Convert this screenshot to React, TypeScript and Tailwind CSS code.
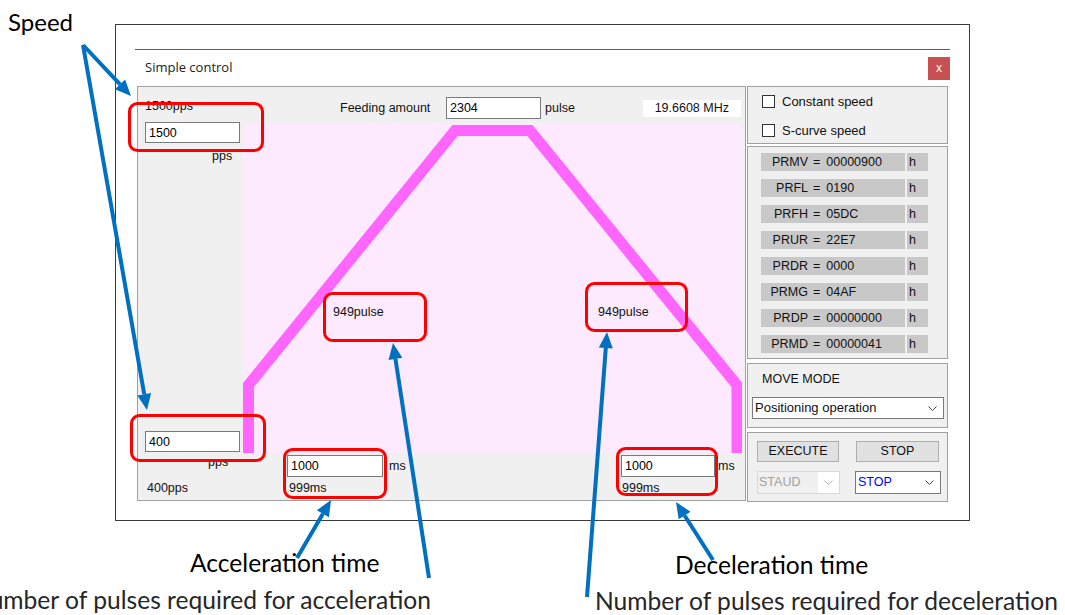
import React from "react";

const regs: [string, string][] = [
  ["PRMV", "00000900"],
  ["PRFL", "0190"],
  ["PRFH", "05DC"],
  ["PRUR", "22E7"],
  ["PRDR", "0000"],
  ["PRMG", "04AF"],
  ["PRDP", "00000000"],
  ["PRMD", "00000041"],
];

function Chevron({ color = "#444" }: { color?: string }) {
  return (
    <svg width="9" height="5" viewBox="0 0 9 5">
      <polyline points="0.5,0.5 4.5,4.5 8.5,0.5" fill="none" stroke={color} strokeWidth="1" />
    </svg>
  );
}

function Field({ value, className }: { value: string; className: string }) {
  return (
    <input
      readOnly
      value={value}
      className={
        "border border-[#7a7a7a] bg-white px-[3px] font-['Liberation_Sans',sans-serif] text-[12.5px] text-black outline-none " +
        className
      }
    />
  );
}

function Arrow({ x1, y1, x2, y2 }: { x1: number; y1: number; x2: number; y2: number }) {
  const dx = x2 - x1;
  const dy = y2 - y1;
  const len = Math.hypot(dx, dy);
  const ux = dx / len;
  const uy = dy / len;
  const hl = 16;
  const hw = 7;
  const bx = x2 - ux * hl;
  const by = y2 - uy * hl;
  const pts = `${x2},${y2} ${bx - uy * hw},${by + ux * hw} ${bx + uy * hw},${by - ux * hw}`;
  return (
    <g>
      <line x1={x1} y1={y1} x2={bx} y2={by} stroke="#0070c0" strokeWidth="4" />
      <polygon points={pts} fill="#0070c0" />
    </g>
  );
}

// red annotation boxes: x, y, w, h
const marks = [
  [129.5, 103.5, 133, 47],
  [131.5, 415.5, 133, 45],
  [284.5, 449.5, 101, 48],
  [617.5, 448.5, 99, 46],
  [324.5, 293.5, 101, 47],
  [586.5, 283.5, 100, 47],
];

export default function App() {
  return (
    <div className="relative h-[615px] w-[1065px] overflow-hidden bg-white pt-[24px]">
      {/* the captured window */}
      <div className="ml-[115px] h-[497px] w-[855px] border border-[#3c3c3c] bg-white font-['Liberation_Sans',sans-serif] text-[12.5px] text-[#111]">
        <div className="ml-[19px] mt-[24px] h-px w-[815px] bg-[#55606c]" />
        <div className="flex h-[36px] items-center pl-[29px] pr-[19px]">
          <span className="font-['Open_Sans',sans-serif] text-[13px] text-[#222]">Simple control</span>
          <div className="ml-auto flex h-[23px] w-[22px] items-center justify-center bg-[#c75050] text-[12px] leading-none text-white">
            x
          </div>
        </div>

        <div className="ml-[21px] flex gap-[1px]">
          {/* graph panel */}
          <div className="flex h-[415px] w-[609px] border border-[#a0a0a0] bg-[#f0f0f0]">
            <div className="flex w-[105px] flex-col pb-[5px] pl-[7px]">
              <div className="mt-[12px] h-[14px] leading-[14px]">1500pps</div>
              <Field value="1500" className="mt-[9px] h-[21px] w-[95px]" />
              <div className="mt-[6px] h-[14px] pl-[67px] leading-[14px]">pps</div>
              <div className="flex-1" />
              <Field value="400" className="h-[21px] w-[95px]" />
              <div className="mt-[3px] h-[14px] pl-[63px] leading-[14px]">pps</div>
              <div className="mt-[12px] h-[14px] pl-[2px] leading-[14px]">400pps</div>
            </div>

            <div className="flex flex-1 flex-col">
              <div className="flex h-[36px] items-center pr-[4px] pt-[6px]">
                <span className="ml-[97px] w-[106px]">Feeding amount</span>
                <Field value="2304" className="h-[22px] w-[95px]" />
                <span className="ml-[4px]">pulse</span>
                <div className="ml-auto flex h-[17px] w-[98px] items-center justify-end bg-white pr-[12px]">
                  19.6608 MHz
                </div>
              </div>

              <div className="relative mr-[3px] h-[330px] bg-[#feeafe]">
                <svg width="499" height="330" className="block">
                  <polyline
                    points="5.5,330 5.5,262 212,7.5 287,7.5 494,262 494,330"
                    fill="none"
                    stroke="#ff66ff"
                    strokeWidth="11"
                  />
                </svg>
                <span className="absolute left-[90px] top-[182px] leading-[14px]">949pulse</span>
                <span className="absolute left-[355px] top-[182px] leading-[14px]">949pulse</span>
              </div>

              <div className="flex flex-1 pl-[44px]">
                <div className="w-[334px]">
                  <div className="mt-[2px] flex items-center">
                    <Field value="1000" className="h-[22px] w-[96px]" />
                    <span className="ml-[6px]">ms</span>
                  </div>
                  <div className="mt-[4px] pl-[2px] leading-[14px]">999ms</div>
                </div>
                <div>
                  <div className="mt-[2px] flex items-center">
                    <Field value="1000" className="h-[22px] w-[94px]" />
                    <span className="ml-[3px]">ms</span>
                  </div>
                  <div className="mt-[4px] pl-[1px] leading-[14px]">999ms</div>
                </div>
              </div>
            </div>
          </div>

          {/* settings column */}
          <div className="flex w-[201px] flex-col">
            <div className="flex h-[58px] flex-col gap-[16px] border border-[#a0a0a0] bg-[#f0f0f0] pl-[14px] pt-[8px]">
              <div className="flex h-[13px] items-center">
                <span className="h-[13px] w-[13px] border border-[#333] bg-white" />
                <span className="ml-[7px] text-[13px] leading-[13px]">Constant speed</span>
              </div>
              <div className="flex h-[13px] items-center">
                <span className="h-[13px] w-[13px] border border-[#333] bg-white" />
                <span className="ml-[7px] text-[13px] leading-[13px]">S-curve speed</span>
              </div>
            </div>

            <div className="mt-[2px] flex h-[213px] flex-col gap-[8px] border border-[#a0a0a0] bg-[#f0f0f0] pl-[13px] pt-[6px]">
              {regs.map(([k, v]) => (
                <div key={k} className="flex h-[18px] gap-[2px]">
                  <div className="flex w-[144px] items-center bg-[#c8c8c8]">
                    <span className="w-[47px] text-right">{k}</span>
                    <span className="ml-[5px]">=</span>
                    <span className="ml-[6px]">{v}</span>
                  </div>
                  <div className="flex w-[21px] items-center bg-[#c8c8c8] pl-[2px]">h</div>
                </div>
              ))}
            </div>

            <div className="mt-[4px] h-[65px] border border-[#a0a0a0] bg-[#f0f0f0] pt-[8px]">
              <div className="pl-[14px] leading-[14px]">MOVE MODE</div>
              <div className="ml-[4px] mt-[11px] flex h-[22px] w-[192px] items-center justify-between border border-[#7a7a7a] bg-white pl-[2px] pr-[6px] text-[13px]">
                <span>Positioning operation</span>
                <Chevron />
              </div>
            </div>

            <div className="mt-[4px] h-[70px] border border-[#a0a0a0] bg-[#f0f0f0] pl-[9px] pt-[8px]">
              <div className="flex">
                <div className="flex h-[21px] w-[82px] items-center justify-center border border-[#adadad] bg-[#e1e1e1]">
                  EXECUTE
                </div>
                <div className="ml-[17px] flex h-[21px] w-[83px] items-center justify-center border border-[#adadad] bg-[#e1e1e1]">
                  STOP
                </div>
              </div>
              <div className="mt-[9px] flex">
                <div className="flex h-[23px] w-[83px] items-center border border-[#d9d9d9] bg-white">
                  <span className="flex h-full w-[60px] items-center bg-[#f0f0f0] pl-[1px] text-[#a0a0a0]">STAUD</span>
                  <span className="ml-auto mr-[6px]">
                    <Chevron color="#b0b0b0" />
                  </span>
                </div>
                <div className="ml-[15px] flex h-[23px] w-[86px] items-center justify-between border border-[#7a7a7a] bg-white pl-[2px] pr-[6px]">
                  <span className="text-[#0000ff]">STOP</span>
                  <Chevron />
                </div>
              </div>
            </div>
          </div>
        </div>
      </div>

      {/* annotations laid over the screenshot */}
      <svg className="pointer-events-none absolute left-0 top-0" width="1065" height="615">
        {marks.map(([x, y, w, h], i) => (
          <rect key={i} x={x} y={y} width={w} height={h} rx="8" fill="none" stroke="#ff0000" strokeWidth="3" />
        ))}
        <Arrow x1={83} y1={45} x2={131} y2={96} />
        <Arrow x1={83} y1={45} x2={147} y2={410} />
        <Arrow x1={297} y1={558} x2={331} y2={500} />
        <Arrow x1={429} y1={578} x2={393} y2={343} />
        <Arrow x1={587} y1={597} x2={607} y2={332} />
        <Arrow x1={713} y1={560} x2={676} y2={502} />
      </svg>

      <div className="absolute left-[8px] top-[7px] font-['Lato',sans-serif] text-[24px] leading-[30px] text-black">Speed</div>
      <div className="absolute left-[190px] top-[548px] font-['Lato',sans-serif] text-[24.6px] leading-[30px] text-black">
        Acceleration time
      </div>
      <div className="absolute left-[675px] top-[550px] font-['Lato',sans-serif] text-[24.6px] leading-[30px] text-black">
        Deceleration time
      </div>
      <div className="absolute right-[634px] top-[585px] whitespace-nowrap font-['Lato',sans-serif] text-[24.6px] leading-[30px] text-[#262626]">
        Number of pulses required for acceleration
      </div>
      <div className="absolute left-[595px] top-[586px] whitespace-nowrap font-['Lato',sans-serif] text-[24.6px] leading-[30px] text-[#262626]">
        Number of pulses required for deceleration
      </div>
    </div>
  );
}
